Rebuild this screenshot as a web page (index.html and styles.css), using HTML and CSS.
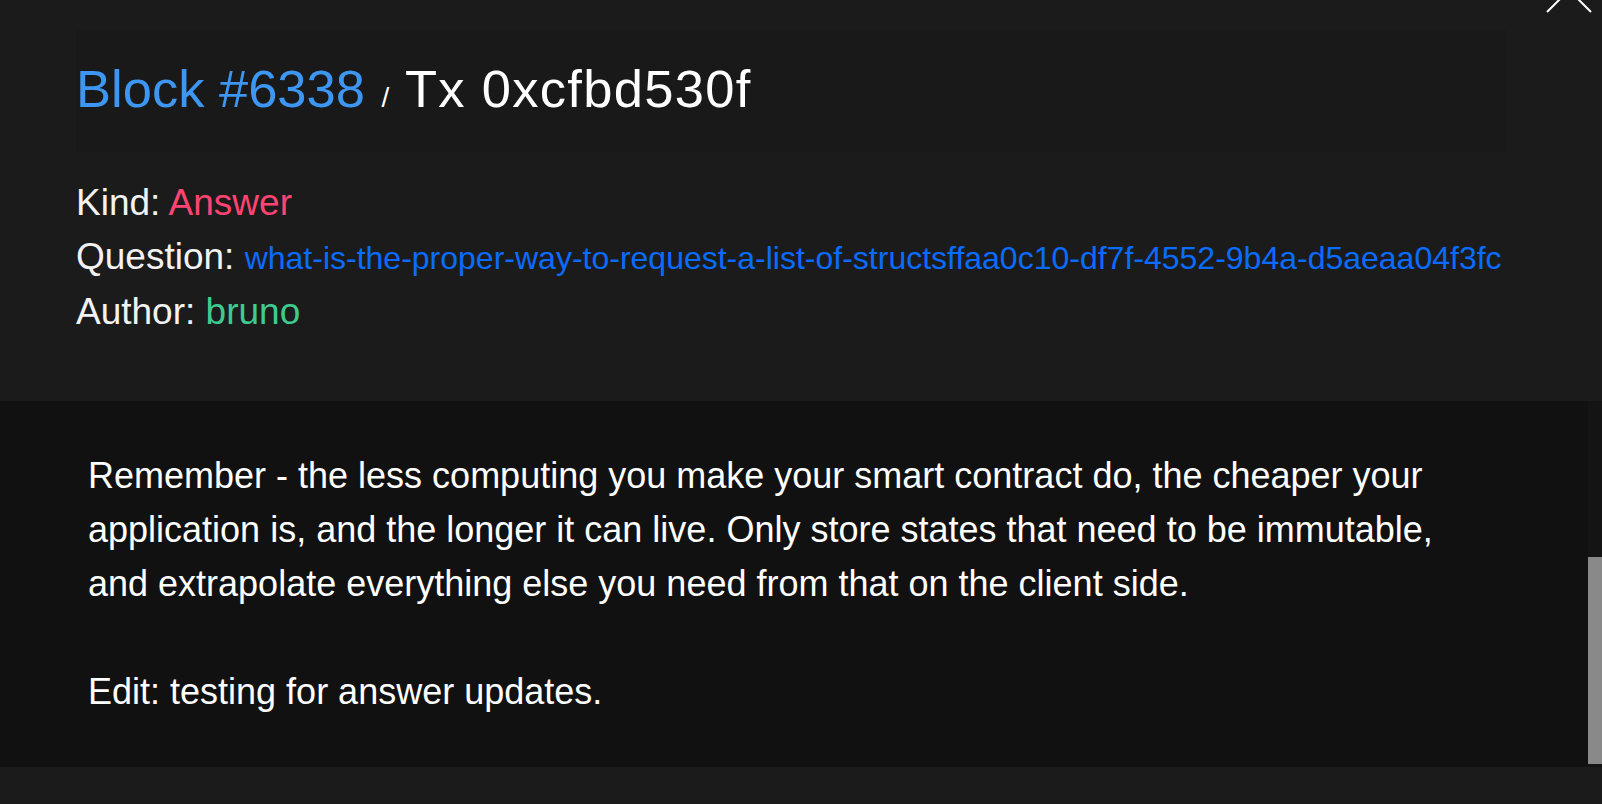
FILE: index.html
```html
<!DOCTYPE html>
<html lang="en">
<head>
    <meta charset="UTF-8">
    <meta name="viewport" content="width=device-width, initial-scale=1.0">
    <title>Tx 0xcfbd530f</title>
    <link rel="stylesheet" href="styles.css">
</head>
<body>
    <div class="modal">
        <!-- Botón de cerrar, medio fuera de la pantalla -->
        <a href="javascript:void(0)" class="close-btn" aria-label="Close">
            <svg width="46" height="46" viewBox="0 0 46 46">
                <line x1="1" y1="1" x2="45" y2="45" stroke="#fff" stroke-width="2"/>
                <line x1="45" y1="1" x2="1" y2="45" stroke="#fff" stroke-width="2"/>
            </svg>
        </a>

        <div class="tx-header">
            <div class="tx-title">
                <h1><a href="#" class="block-link">Block #6338</a> <small>/</small> <span class="tx-hash">Tx 0xcfbd530f</span></h1>
            </div>

            <div class="tx-meta">
                <div>Kind: <span class="kind">Answer</span></div>
                <div>Question: <a href="#" class="question-link">what-is-the-proper-way-to-request-a-list-of-structsffaa0c10-df7f-4552-9b4a-d5aeaa04f3fc</a></div>
                <div>Author: <a href="#" class="author">bruno</a></div>
            </div>
        </div>

        <div class="tx-body">
            <div class="tx-content">
                <p>Remember - the less computing you make your smart contract do, the cheaper your application is, and the longer it can live. Only store states that need to be immutable, and extrapolate everything else you need from that on the client side.</p>
                <p>Edit: testing for answer updates.</p>
            </div>
            <div class="scroll-track">
                <div class="scroll-thumb"></div>
            </div>
        </div>
    </div>
</body>
</html>
```

FILE: styles.css
```css
body {
    margin: 0;
    padding: 0;
    font-family: "Liberation Sans", Arial, Helvetica, sans-serif;
    background-color: #1b1b1b;
    color: #f2f2f2;
    overflow: hidden;
}

a {
    text-decoration: none;
}

.modal {
    position: relative;
    height: 804px;
}

.close-btn {
    position: absolute;
    top: -33px;
    right: 10px;
    width: 46px;
    height: 46px;
}

.close-btn svg {
    display: block;
}

/* Cabecera de la transacción */
.tx-header {
    padding: 30px 95px 62px 76px;
}

.tx-title {
    background-color: #191919;
    padding: 28px 0 32px 0;
}

.tx-title h1 {
    margin: 0;
    font-size: 52.5px;
    line-height: 62px;
    font-weight: normal;
    color: #fff;
}

.tx-title h1 a,
.tx-title h1 small,
.tx-title h1 span {
    line-height: 1;
}

.tx-title small {
    font-size: 28px;
    margin: 0 1px 0 2px;
}

.tx-hash {
    letter-spacing: 1.3px;
}

.block-link {
    color: #3d97f2;
}

.tx-meta {
    margin-top: 24px;
    font-size: 37px;
    line-height: 54px;
}

.kind {
    color: #ff4473;
}

.question-link {
    font-size: 32px;
    color: #0a6cff;
}

.author {
    color: #3fca8f;
}

/* Contenido */
.tx-body {
    display: flex;
    background-color: #111;
    height: 366px;
}

.tx-content {
    flex: 1;
    padding: 48px 120px 48px 88px;
    font-size: 36px;
    line-height: 54px;
    color: #fff;
}

.tx-content p {
    margin: 0 0 54px 0;
}

.tx-content p:last-child {
    margin-bottom: 0;
}

.scroll-track {
    width: 14px;
    background-color: #141414;
}

.scroll-thumb {
    margin-top: 156px;
    height: 207px;
    background-color: #898989;
}
```
